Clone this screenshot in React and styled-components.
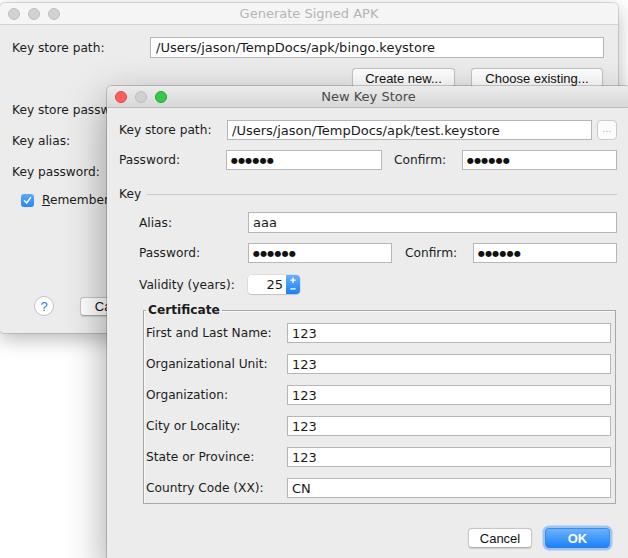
import React from 'react';
import styled, { createGlobalStyle } from 'styled-components';

const GlobalStyle = createGlobalStyle`
  html, body {
    margin: 0;
    padding: 0;
    background: #fff;
  }
`;

const Desktop = styled.div`
  position: relative;
  width: 628px;
  height: 558px;
  overflow: hidden;
  background: #fff;
  font-family: 'DejaVu Sans', 'Liberation Sans', sans-serif;
  font-size: 12.2px;
  color: #1c1c1c;
`;

const Window = styled.div`
  position: absolute;
  left: ${p => p.$left}px;
  top: ${p => p.$top}px;
  width: ${p => p.$width}px;
  height: ${p => p.$height}px;
  display: flex;
  flex-direction: column;
  background: #ececec;
  border-radius: 5px 5px 4px 4px;
  box-shadow: ${p =>
    p.$active
      ? '0 14px 40px rgba(0,0,0,0.38), 0 0 0 1px rgba(0,0,0,0.18)'
      : '0 6px 20px rgba(0,0,0,0.28), 0 0 0 1px rgba(0,0,0,0.12)'};
`;

const TitleBar = styled.div`
  position: relative;
  flex: none;
  box-sizing: border-box;
  height: 22px;
  display: flex;
  align-items: center;
  justify-content: center;
  border-radius: 5px 5px 0 0;
  border-bottom: 1px solid ${p => (p.$active ? '#bcbcbc' : '#d2d2d2')};
  background: ${p => (p.$active ? 'linear-gradient(#ebebeb, #d8d8d8)' : '#f5f5f5')};
  color: ${p => (p.$active ? '#4a4a4a' : '#b4b4b4')};
  font-size: 13px;
`;

const Lights = styled.div`
  position: absolute;
  left: 8px;
  top: 5px;
  display: flex;
  gap: 8px;
`;

const Light = styled.span`
  box-sizing: border-box;
  width: 12px;
  height: 12px;
  border-radius: 50%;
  background: ${p => p.$fill};
  border: 1px solid ${p => p.$edge};
`;

const Body = styled.div`
  flex: 1;
  display: flex;
  flex-direction: column;
  padding: ${p => p.$pad};
`;

const Row = styled.div`
  display: flex;
  align-items: center;
  height: ${p => p.$h || 20}px;
  margin-top: ${p => p.$mt || 0}px;
  justify-content: ${p => p.$justify || 'flex-start'};
  gap: ${p => p.$gap || 0}px;
  padding-left: ${p => p.$pl || 0}px;
  padding-right: ${p => p.$pr || 0}px;
`;

const Label = styled.span`
  flex: 0 0 ${p => (p.$w ? `${p.$w}px` : 'auto')};
  margin-left: ${p => p.$ml || 0}px;
  white-space: nowrap;
`;

const Field = styled.div`
  box-sizing: border-box;
  height: 100%;
  flex: ${p => (p.$w ? `0 0 ${p.$w}px` : '1 1 0')};
  min-width: 0;
  display: flex;
  align-items: center;
  padding: 0 ${p => p.$px || 4}px;
  background: #fff;
  border: 1px solid #b6b6b6;
  font-size: 13px;
  color: #1a1a1a;
  white-space: nowrap;
  overflow: hidden;
`;

const Dots = styled.span`
  font-size: 8px;
  letter-spacing: 0.2px;
  color: #111;
  padding-top: 1px;
`;

const SmallButton = styled.div`
  box-sizing: border-box;
  flex: 0 0 20px;
  height: 20px;
  margin-left: 5px;
  display: flex;
  align-items: flex-end;
  justify-content: center;
  padding-bottom: 5px;
  background: #fbfbfb;
  border: 1px solid #cacaca;
  border-radius: 4px;
  color: #9a9a9a;
  font-size: 8px;
  letter-spacing: 0.5px;
`;

const PushButton = styled.button`
  box-sizing: border-box;
  width: ${p => p.$w}px;
  height: ${p => p.$h || 20}px;
  padding: 0;
  border-radius: 4px;
  font-family: 'Liberation Sans', Arial, sans-serif;
  font-size: 13px;
  color: ${p => (p.$primary ? '#fff' : '#111')};
  font-weight: ${p => (p.$primary ? 'bold' : 'normal')};
  border: 1px solid ${p => (p.$primary ? '#3a8cf0' : '#c6c6c6')};
  border-bottom-color: ${p => (p.$primary ? '#2f7de6' : '#acacac')};
  background: ${p => (p.$primary ? 'linear-gradient(#6cb3fb, #1c82fa)' : '#fff')};
  box-shadow: ${p =>
    p.$primary ? '0 0 0 2.5px rgba(110, 170, 245, 0.6)' : '0 0.5px 1px rgba(0,0,0,0.12)'};
`;

const Separator = styled.div`
  flex: 1;
  height: 1px;
  margin-left: 6px;
  background: #c9c9c9;
`;

const Indent = styled.div`
  display: flex;
  flex-direction: column;
  padding-left: 20px;
`;

const Spinner = styled.div`
  display: flex;
  width: 52px;
  height: 19px;
  border-radius: 4px;
  overflow: hidden;
  box-shadow: 0 0 0 0.5px rgba(0,0,0,0.12), 0 1px 1px rgba(0,0,0,0.12);
`;

const SpinValue = styled.div`
  flex: 1;
  display: flex;
  align-items: center;
  justify-content: flex-end;
  padding-right: 3px;
  background: #fff;
  font-size: 13px;
  color: #1a1a1a;
`;

const Stepper = styled.div`
  flex: 0 0 14px;
  display: flex;
  background: linear-gradient(#6ab1fa, #1e7ff4);
`;

const Fieldset = styled.fieldset`
  margin: 8px 1px 0 24px;
  padding: 5px 4px 5px 2px;
  border: 1px solid #a9a9a9;
  box-shadow: inset 1px 1px 0 #f8f8f8;
  display: flex;
  flex-direction: column;
  gap: 11px;
  min-width: 0;
`;

const Legend = styled.legend`
  padding: 0 2px;
  font-weight: bold;
  line-height: 16px;
  color: #1a1a1a;
`;

const Checkbox = styled.span`
  box-sizing: border-box;
  width: 13px;
  height: 13px;
  margin-right: 8px;
  border-radius: 3px;
  background: linear-gradient(#5fa8fa, #2a83f6);
  display: flex;
  align-items: center;
  justify-content: center;
`;

const HelpButton = styled.span`
  box-sizing: border-box;
  width: 20px;
  height: 20px;
  margin-right: 26px;
  border-radius: 50%;
  background: #fff;
  border: 1px solid #c2c2c2;
  display: flex;
  align-items: center;
  justify-content: center;
  color: #2a78e4;
  font-family: 'Liberation Sans', Arial, sans-serif;
  font-size: 13px;
`;

const BottomRow = styled(Row)`
  margin-top: auto;
`;

const pw = <Dots>●●●●●●</Dots>;

const certRows = [
  ['First and Last Name:', '123'],
  ['Organizational Unit:', '123'],
  ['Organization:', '123'],
  ['City or Locality:', '123'],
  ['State or Province:', '123'],
  ['Country Code (XX):', 'CN'],
];

function TrafficLights({ active }) {
  if (!active) {
    return (
      <Lights>
        <Light $fill="#d1d1d1" $edge="#c0c0c0" />
        <Light $fill="#d1d1d1" $edge="#c0c0c0" />
        <Light $fill="#d1d1d1" $edge="#c0c0c0" />
      </Lights>
    );
  }
  return (
    <Lights>
      <Light $fill="#fc605c" $edge="#df4744" />
      <Light $fill="#d0d0d0" $edge="#bdbdbd" />
      <Light $fill="#35c84a" $edge="#25a634" />
    </Lights>
  );
}

export default function App() {
  return (
    <Desktop>
      <GlobalStyle />

      <Window $left={0} $top={3} $width={618} $height={330}>
        <TitleBar>
          <TrafficLights />
          Generate Signed APK
        </TitleBar>
        <Body $pad="0 14px 17px 12px">
          <Row $h={21} $mt={12}>
            <Label $w={138}>Key store path:</Label>
            <Field $px={5}>/Users/jason/TempDocs/apk/bingo.keystore</Field>
          </Row>
          <Row $mt={10} $justify="flex-end" $gap={16} $pr={1}>
            <PushButton $w={103}>Create new...</PushButton>
            <PushButton $w={132}>Choose existing...</PushButton>
          </Row>
          <Row $mt={12}>
            <Label>Key store password:</Label>
          </Row>
          <Row $mt={11}>
            <Label>Key alias:</Label>
          </Row>
          <Row $mt={11}>
            <Label>Key password:</Label>
          </Row>
          <Row $mt={8} $pl={9}>
            <Checkbox>
              <svg width="9" height="9" viewBox="0 0 9 9">
                <path d="M1.5 4.8 L3.6 7 L7.6 1.6" fill="none" stroke="#fff" strokeWidth="1.5" strokeLinecap="round" strokeLinejoin="round" />
              </svg>
            </Checkbox>
            <Label>
              <u>R</u>emember
            </Label>
          </Row>
          <BottomRow $pl={22}>
            <HelpButton>?</HelpButton>
            <PushButton $w={70} $h={19}>Cancel</PushButton>
          </BottomRow>
        </Body>
      </Window>

      <Window $active $left={107} $top={86} $width={523} $height={480}>
        <TitleBar $active>
          <TrafficLights active />
          New Key Store
        </TitleBar>
        <Body $pad="12px 13px 0 12px">
          <Row>
            <Label $w={108}>Key store path:</Label>
            <Field>/Users/jason/TempDocs/apk/test.keystore</Field>
            <SmallButton>...</SmallButton>
          </Row>
          <Row $mt={10}>
            <Label $w={107}>Password:</Label>
            <Field $w={156}>{pw}</Field>
            <Label $w={68} $ml={12}>Confirm:</Label>
            <Field $w={155}>{pw}</Field>
          </Row>
          <Row $mt={14}>
            <Label>Key</Label>
            <Separator />
          </Row>
          <Indent>
            <Row $mt={8} $h={21}>
              <Label $w={109}>Alias:</Label>
              <Field>aaa</Field>
            </Row>
            <Row $mt={10}>
              <Label $w={109}>Password:</Label>
              <Field $w={144}>{pw}</Field>
              <Label $w={68} $ml={13}>Confirm:</Label>
              <Field $w={144}>{pw}</Field>
            </Row>
            <Row $mt={12} $h={19}>
              <Label $w={109}>Validity (years):</Label>
              <Spinner>
                <SpinValue>25</SpinValue>
                <Stepper>
                  <svg width="14" height="19" viewBox="0 0 14 19">
                    <path d="M7 2.5 V8 M4.3 5.2 H9.7 M4.3 13.8 H9.7" fill="none" stroke="#fff" strokeWidth="1.3" />
                  </svg>
                </Stepper>
              </Spinner>
            </Row>
          </Indent>
          <Fieldset>
            <Legend>Certificate</Legend>
            {certRows.map(([name, value]) => (
              <Row key={name}>
                <Label $w={141}>{name}</Label>
                <Field>{value}</Field>
              </Row>
            ))}
          </Fieldset>
          <Row $mt={24} $justify="flex-end" $gap={13} $pr={7}>
            <PushButton $w={64}>Cancel</PushButton>
            <PushButton $w={65} $primary>OK</PushButton>
          </Row>
        </Body>
      </Window>
    </Desktop>
  );
}
